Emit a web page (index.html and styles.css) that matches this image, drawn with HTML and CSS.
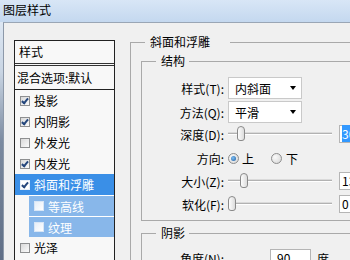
FILE: index.html
```html
<!DOCTYPE html>
<html lang="zh-CN">
<head>
<meta charset="utf-8">
<title>图层样式</title>
<link rel="stylesheet" href="styles.css">
</head>
<body>
<div class="window">
  <div class="titlebar">图层样式</div>
  <div class="frame">
    <div class="client">
      <div class="list">
        <div class="list-head">样式</div>
        <div class="list-item mixed">混合选项:默认</div>
        <div class="list-item"><span class="cb checked"></span>投影</div>
        <div class="list-item"><span class="cb checked"></span>内阴影</div>
        <div class="list-item"><span class="cb"></span>外发光</div>
        <div class="list-item"><span class="cb checked"></span>内发光</div>
        <div class="list-item selected"><span class="cb checked"></span>斜面和浮雕</div>
        <div class="list-item sub"><span class="cb"></span>等高线</div>
        <div class="list-item sub"><span class="cb"></span>纹理</div>
        <div class="list-item"><span class="cb"></span>光泽</div>
      </div>
      <div class="panel">
        <fieldset class="group outer">
          <legend class="outer-title">斜面和浮雕</legend>
          <fieldset class="group inner">
            <legend>结构</legend>
            <div class="row tall">
              <span class="lbl">样式(T):</span>
              <span class="select"><span class="sel-text">内斜面</span><span class="arrow"></span></span>
            </div>
            <div class="row tall gap2">
              <span class="lbl">方法(Q):</span>
              <span class="select"><span class="sel-text">平滑</span><span class="arrow"></span></span>
            </div>
            <div class="row gap2">
              <span class="lbl">深度(D):</span>
              <span class="slider"><span class="track"></span><span class="thumb" style="left:9px"></span></span>
              <span class="num"><span class="hl">300</span></span>
            </div>
            <div class="row gap6">
              <span class="lbl">方向:</span>
              <span class="radio on"></span><span class="rlabel">上</span>
              <span class="radio second"></span><span class="rlabel">下</span>
            </div>
            <div class="row gap5">
              <span class="lbl">大小(Z):</span>
              <span class="slider"><span class="track"></span><span class="thumb" style="left:12px"></span></span>
              <span class="num">13</span>
            </div>
            <div class="row gap5">
              <span class="lbl">软化(F):</span>
              <span class="slider"><span class="track"></span><span class="thumb" style="left:0px"></span></span>
              <span class="num">0</span>
            </div>
          </fieldset>
          <fieldset class="group inner shadow">
            <legend>阴影</legend>
            <div class="row">
              <span class="lbl">角度(N):</span>
              <span class="dial-space"></span>
              <span class="num angle">90</span>
              <span class="unit">度</span>
            </div>
          </fieldset>
        </fieldset>
      </div>
    </div>
  </div>
</div>
</body>
</html>
```
FILE: styles.css
```css
html, body {
  margin: 0;
  padding: 0;
}
body {
  width: 350px;
  height: 260px;
  overflow: hidden;
  font-family: "Noto Sans CJK SC", "Noto Sans", sans-serif;
  font-size: 12px;
  color: #000;
}
.window {
  width: 350px;
  height: 260px;
  overflow: hidden;
  display: flex;
  flex-direction: column;
  background: #f0f0f0;
}
.titlebar {
  height: 22px;
  line-height: 20px;
  padding-left: 3px;
  background: linear-gradient(#d8e6f6, #c4d8ef);
  flex: none;
}
.frame {
  flex: 1;
  display: flex;
  padding-left: 3px;
  background: linear-gradient(to bottom, #dde7f3 0, #c9d5e3 50px, #7b8aa0 120px, #5a6981 260px);
}
.client {
  flex: 1;
  display: flex;
  align-items: flex-start;
  background: #f0f0f0;
  border-left: 1px solid #8d99a9;
  border-top: 1px solid #9aa6b5;
}
.list {
  flex: none;
  width: 99px;
  margin: 17px 0 0 10px;
  border: 1px solid #222;
  background: #f8f8f8;
  height: 260px;
}
.list-head {
  height: 22px;
  line-height: 21px;
  padding-left: 4px;
  border-bottom: 3px double #333;
}
.list-item {
  height: 21px;
  line-height: 21px;
  box-sizing: border-box;
  display: flex;
  align-items: center;
  padding-left: 5px;
  white-space: nowrap;
}
.list-item.mixed {
  height: 24px;
  line-height: 23px;
  padding-left: 2px;
  border-bottom: 1px solid #222;
}
.list-item.selected {
  background: #3a8fe7;
  color: #fff;
}
.list-item.sub {
  margin-left: 14px;
  background: #88b7ea;
  color: #fff;
  border-top: 1px solid #fff;
}
.cb {
  position: relative;
  flex: none;
  width: 10px;
  height: 10px;
  box-sizing: border-box;
  border: 1px solid #8e8f90;
  background: linear-gradient(135deg, #d9d9d9, #fbfbfb);
  margin-right: 4px;
}
.list-item.selected .cb {
  border-color: #e8f0fa;
  background: #fff;
}
.list-item.sub .cb {
  border-color: #d8e6f6;
  background: linear-gradient(135deg, #e6eef8, #fff);
}
.cb.checked::after {
  content: "";
  position: absolute;
  left: 2px;
  top: 0px;
  width: 2px;
  height: 5px;
  border-right: 2px solid #24467c;
  border-bottom: 2px solid #24467c;
  transform: rotate(40deg);
}
.panel {
  flex: none;
  margin: 11px 0 0 15px;
}
.group {
  margin: 0;
  padding: 0;
  border: 1px solid #a9a9a9;
  min-width: 0;
}
.group legend {
  margin-left: 14px;
  padding: 0 4px 0 5px;
  line-height: 16px;
  height: 16px;
}
.group legend.outer-title {
  padding-right: 20px;
}
.outer {
  width: 300px;
  height: 260px;
}
.inner {
  margin: 3px 0 0 10px;
  padding: 8px 0 7px 0;
}
.inner.shadow {
  margin-top: 4px;
}
.row {
  display: flex;
  align-items: center;
  height: 18px;
  white-space: nowrap;
}
.row.tall {
  height: 22px;
}
.row.gap2 {
  margin-top: 2px;
}
.row.gap5 {
  margin-top: 5px;
}
.row.gap6 {
  margin-top: 6px;
}
.lbl {
  width: 82px;
  margin-right: 4px;
  text-align: right;
  flex: none;
}
.select {
  width: 74px;
  height: 22px;
  box-sizing: border-box;
  border: 1px solid #c9c9c9;
  background: #fff;
  display: flex;
  align-items: center;
  justify-content: space-between;
  padding: 0 5px 0 6px;
}
.arrow {
  width: 0;
  height: 0;
  border-left: 3.5px solid transparent;
  border-right: 3.5px solid transparent;
  border-top: 4px solid #000;
}
.slider {
  position: relative;
  width: 104px;
  height: 18px;
  margin-right: 7px;
  flex: none;
}
.track {
  position: absolute;
  left: 0;
  right: 0;
  top: 8px;
  height: 1px;
  background: #b2b2b2;
  border-bottom: 1px solid #fff;
  box-shadow: 0 -1px 0 #dadada;
}
.thumb {
  position: absolute;
  top: 1px;
  width: 8px;
  height: 15px;
  box-sizing: border-box;
  border: 1px solid #8a8a8a;
  border-radius: 4px 4px 3px 3px;
  background: linear-gradient(to right, #fdfdfd, #dcdcdc);
}
.num {
  flex: none;
  width: 40px;
  height: 18px;
  box-sizing: border-box;
  border: 1px solid #b5b5b5;
  background: #fff;
  line-height: 16px;
  padding-left: 2px;
}
.hl {
  background: #3399ff;
  color: #fff;
}
.radio {
  position: relative;
  flex: none;
  width: 11px;
  height: 11px;
  box-sizing: border-box;
  border-radius: 50%;
  border: 1px solid #8d8d8d;
  background: radial-gradient(circle at 35% 35%, #fafafa, #d4d4d4);
  margin-right: 3px;
}
.radio.on::after {
  content: "";
  position: absolute;
  left: 2px;
  top: 2px;
  width: 5px;
  height: 5px;
  border-radius: 50%;
  background: radial-gradient(circle at 40% 40%, #7fc0f5, #1b5a9e);
}
.radio.second {
  margin-left: 17px;
  margin-right: 4px;
}
.rlabel {
  flex: none;
}
.dial-space {
  width: 42px;
  flex: none;
}
.num.angle {
  width: 41px;
  padding-left: 6px;
  margin-right: 6px;
}
.unit {
  flex: none;
}
```
